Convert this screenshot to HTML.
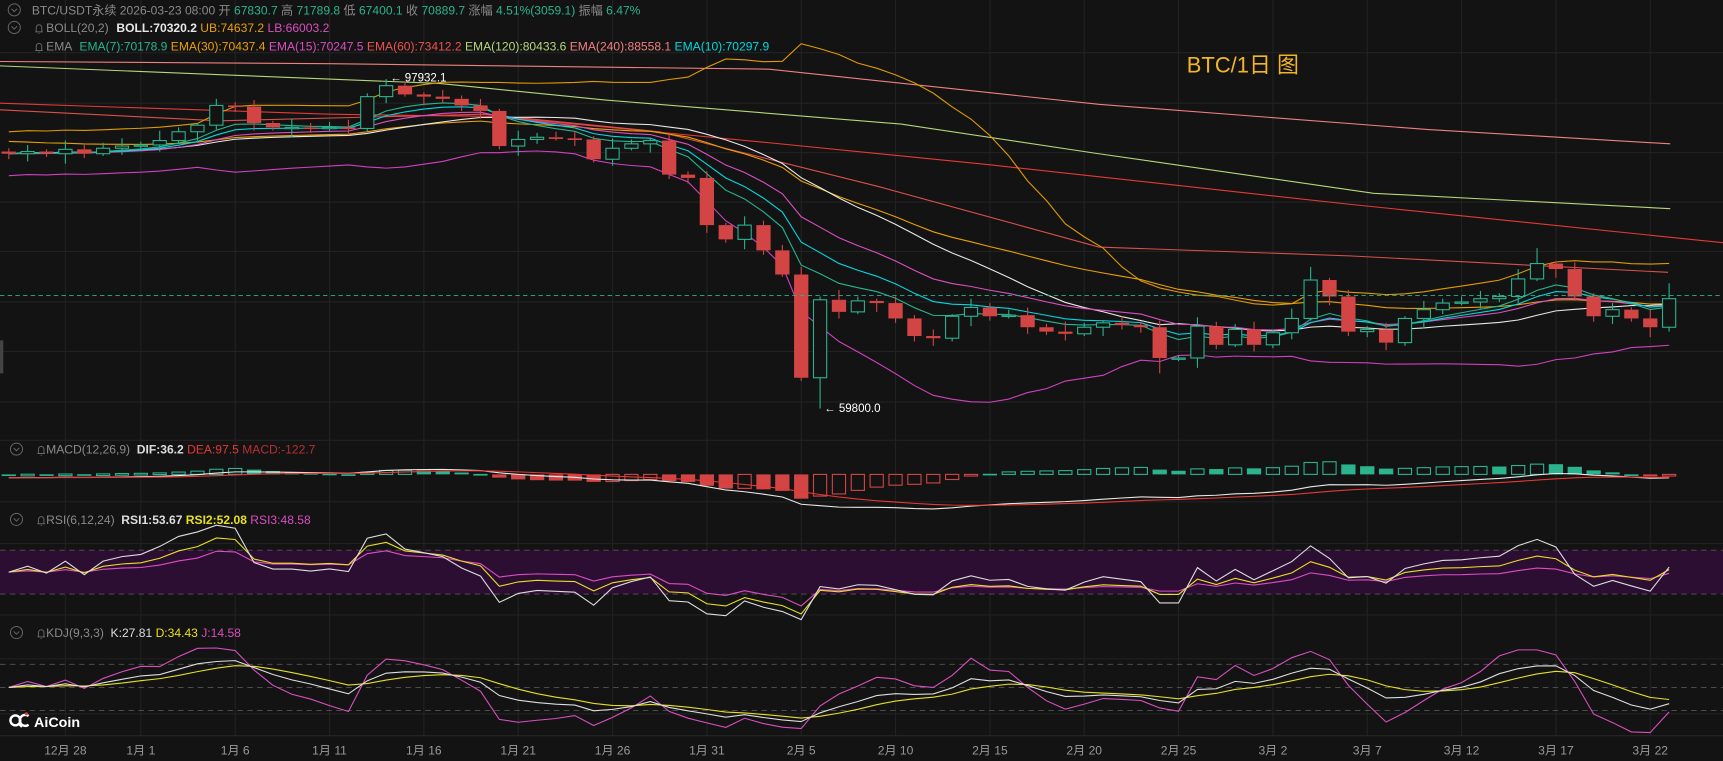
<!DOCTYPE html>
<html><head><meta charset="utf-8"><style>
html,body{margin:0;padding:0;background:#131313;overflow:hidden}
svg{display:block}
text{font-family:"Liberation Sans","Noto Sans CJK SC",sans-serif}
</style></head><body>
<svg id="s" width="1723" height="761" viewBox="0 0 1568 693" preserveAspectRatio="none" xmlns="http://www.w3.org/2000/svg">
<rect width="1568" height="693" fill="#131313"/>
<g id="grid" stroke="#222" stroke-width="1"></g>
<rect x="0" y="501" width="1568" height="40" fill="#2c0e33"/>
<g stroke="#555" stroke-dasharray="5,4" stroke-width="0.8">
<line x1="0" y1="501" x2="1568" y2="501"/><line x1="0" y1="541" x2="1568" y2="541"/>
<line x1="0" y1="605" x2="1568" y2="605"/><line x1="0" y1="626" x2="1568" y2="626"/><line x1="0" y1="647" x2="1568" y2="647"/>
</g>
<line x1="0" y1="670" x2="1568" y2="670" stroke="#2a2a2a"/>
<g id="plot"></g>
<line x1="0" y1="269" x2="1568" y2="269" stroke="#2bb38e" stroke-dasharray="4,3" stroke-width="0.8"/>
<rect x="0" y="310" width="3" height="30" fill="#444"/>
<g font-size="11">
<g fill="none" stroke="#666" stroke-width="0.9">
<circle cx="13" cy="9" r="5.5"/><path d="M10.5 8 L13 10.5 L15.5 8"/>
<circle cx="13" cy="25" r="5.5"/><path d="M10.5 24 L13 26.5 L15.5 24"/>
<circle cx="15" cy="409" r="5.5"/><path d="M12.5 408 L15 410.5 L17.5 408"/>
<circle cx="15" cy="473" r="5.5"/><path d="M12.5 472 L15 474.5 L17.5 472"/>
<circle cx="15" cy="576" r="5.5"/><path d="M12.5 575 L15 577.5 L17.5 575"/>
<path d="M32 29 h7 M33 29 v-4 a2.5 2.5 0 0 1 5 0 v4 M35.5 30 v1"/>
<path d="M32 46 h7 M33 46 v-4 a2.5 2.5 0 0 1 5 0 v4 M35.5 47 v1"/>
<path d="M34 413 h7 M35 413 v-4 a2.5 2.5 0 0 1 5 0 v4 M37.5 414 v1"/>
<path d="M34 477 h7 M35 477 v-4 a2.5 2.5 0 0 1 5 0 v4 M37.5 478 v1"/>
<path d="M34 580 h7 M35 580 v-4 a2.5 2.5 0 0 1 5 0 v4 M37.5 581 v1"/>
</g>
<text x="29" y="13" fill="#8a8a8a">BTC/USDT永续 2026-03-23 08:00 开 <tspan fill="#2bb38e">67830.7</tspan> 高 <tspan fill="#2bb38e">71789.8</tspan> 低 <tspan fill="#2bb38e">67400.1</tspan> 收 <tspan fill="#2bb38e">70889.7</tspan> 涨幅 <tspan fill="#2bb38e">4.51%(3059.1)</tspan> 振幅 <tspan fill="#2bb38e">6.47%</tspan></text>
<text x="42" y="29" fill="#8a8a8a">BOLL(20,2) <tspan fill="#e8e8e8" font-weight="bold" dx="4">BOLL:70320.2</tspan> <tspan fill="#eaa000">UB:74637.2</tspan> <tspan fill="#d94fc0">LB:66003.2</tspan></text>
<text x="42" y="46" fill="#8a8a8a">EMA <tspan fill="#26b58f" dx="4">EMA(7):70178.9</tspan> <tspan fill="#eaa000">EMA(30):70437.4</tspan> <tspan fill="#d94fc0">EMA(15):70247.5</tspan> <tspan fill="#ef5350">EMA(60):73412.2</tspan> <tspan fill="#b5d67a">EMA(120):80433.6</tspan> <tspan fill="#f08080">EMA(240):88558.1</tspan> <tspan fill="#00d8e0">EMA(10):70297.9</tspan></text>
<text x="42" y="413" fill="#8a8a8a">MACD(12,26,9) <tspan fill="#ddd" font-weight="bold" dx="3">DIF:36.2</tspan> <tspan fill="#e53935">DEA:97.5</tspan> <tspan fill="#b83030">MACD:-122.7</tspan></text>
<text x="42" y="477" fill="#8a8a8a">RSI(6,12,24) <tspan fill="#ddd" font-weight="bold" dx="3">RSI1:53.67</tspan> <tspan fill="#e6e020" font-weight="bold">RSI2:52.08</tspan> <tspan fill="#d94fc0">RSI3:48.58</tspan></text>
<text x="42" y="580" fill="#8a8a8a">KDJ(9,3,3) <tspan fill="#ddd" dx="3">K:27.81</tspan> <tspan fill="#e6e020">D:34.43</tspan> <tspan fill="#d94fc0">J:14.58</tspan></text>
</g>
<text x="1080" y="66" font-size="20" fill="#f2b52a">BTC/1日 图</text>
<text x="355" y="74" font-size="10.5" fill="#fff">← 97932.1</text>
<text x="750" y="375" font-size="10.5" fill="#fff">← 59800.0</text>
<g fill="none" stroke="#fff" stroke-width="2.2"><circle cx="14" cy="656" r="4.5"/><path d="M17 659 l3 3"/><path d="M26 652 a5 5 0 1 0 0 8"/></g>
<circle cx="24" cy="650" r="1.4" fill="#e53935"/>
<text x="31" y="662" font-size="13" font-weight="bold" fill="#fff">AiCoin</text>
<g id="xl" font-size="11" fill="#999" text-anchor="middle"></g>
</svg>
<script>
var C=[140,138,140,136,140,135,133,132,128,120,114,96,97,112,116,116,117,116,117,88,78,86,88,90,96,101,133,127,125,126,127,145,135,131,128,159,162,205,218,205,228,250,344,273,284,274,276,290,306,308,288,280,288,287,298,302,304,298,294,296,298,326,326,297,314,300,314,303,290,255,270,302,300,312,290,282,276,275,272,270,254,240,245,270,288,282,290,298,272];
var N=C.length,X=function(i){return 8+i*17.17};
var O=[],H=[],L=[],W=[3,6,2,8,4,5,7,3,9,4,2,6];
for(var i=0;i<N;i++){O[i]=i?C[i-1]:138;var t=Math.min(O[i],C[i]),b=Math.max(O[i],C[i]);H[i]=t-W[i%12];L[i]=b+W[(i+5)%12];}
H[20]=72;L[43]=372;H[81]=226;L[42]=347;H[69]=243;L[61]=340;H[88]=258;
var ns="http://www.w3.org/2000/svg",P=document.getElementById('plot'),G=document.getElementById('grid');
function el(n,a,p){var e=document.createElementNS(ns,n);for(var k in a)e.setAttribute(k,a[k]);(p||P).appendChild(e);return e}
function pl(arr,col,w){var d='';for(var i=0;i<arr.length;i++){d+=(d?'L':'M')+X(i).toFixed(1)+' '+arr[i].toFixed(1)}el('path',{d:d,fill:'none',stroke:col,'stroke-width':w||1})}
var labs=['12月 28','1月 1','1月 6','1月 11','1月 16','1月 21','1月 26','1月 31','2月 5','2月 10','2月 15','2月 20','2月 25','3月 2','3月 7','3月 12','3月 17','3月 22'];
var xl=document.getElementById('xl');
for(var k=0;k<labs.length;k++){var idx=k==0?3:7+5*(k-1);var xi=X(idx);el('line',{x1:xi,y1:0,x2:xi,y2:670},G);var tx=el('text',{x:xi,y:687},xl);tx.textContent=labs[k];}
[48,94,139,184,229,275,320,366,401,457,495,560,600,650].forEach(function(y){el('line',{x1:0,y1:y,x2:1568,y2:y},G)});
function lp(pts,col){el('path',{d:'M'+pts.join('L'),fill:'none',stroke:col,'stroke-width':1})}
lp(['0 56','300 58','700 63','1000 95','1300 118','1520 131'],'#f08080');
lp(['0 60','200 68','400 76','550 91','820 113','1000 140','1250 176','1520 190'],'#b5d67a');
lp(['0 94','300 104','450 106','700 130','900 150','1228 186','1568 221'],'#e53935');
lp(['0 100','200 110','440 104','600 120','800 170','1000 225','1228 233','1518 248'],'#d9504a');
function ema(a,n,s){var r=[],k=2/(n+1),v=s==null?a[0]:s;for(var i=0;i<a.length;i++){v=i==0&&s==null?a[0]:v+k*(a[i]-v);r.push(v)}return r}
var e7=ema(C,7),e10=ema(C,10),e15=ema(C,15),e30=ema(C,30,128);
var bm=[],bu=[],bl=[];
for(var i=0;i<N;i++){var s=Math.max(0,i-19),sum=0,c=0;for(var j=s;j<=i;j++){sum+=C[j];c++}var m=sum/c,v=0;for(j=s;j<=i;j++)v+=(C[j]-m)*(C[j]-m);var sd=Math.sqrt(v/c);if(i<19){sd=Math.max(sd,10);}bm.push(m);bu.push(m-2*sd);bl.push(m+2*sd)}
pl(bu,'#e09a00');pl(bl,'#d040c0');pl(e30,'#eaa000');pl(bm,'#e8e8e8');pl(e15,'#d94fc0');pl(e10,'#00d8e0');pl(e7,'#26b58f');
for(i=0;i<N;i++){var x=X(i),up=C[i]<=O[i],col=up?'#2bb38e':'#d34545',t=Math.min(O[i],C[i]),b=Math.max(O[i],C[i]);
el('line',{x1:x,y1:H[i],x2:x,y2:t,stroke:col});el('line',{x1:x,y1:b,x2:x,y2:L[i],stroke:col});
if(up)el('rect',{x:x-6,y:t,width:12,height:Math.max(b-t,1.2),fill:'#131313',stroke:col,'stroke-width':1});
else el('rect',{x:x-6.5,y:t,width:13,height:Math.max(b-t,1.5),fill:col});}
var p=C.map(function(y){return -y}),a12=ema(p,12),a26=ema(p,26),dif=[],dea,hist=[];
for(i=0;i<N;i++)dif.push(a12[i]-a26[i]);dea=ema(dif,9);
for(i=0;i<N;i++){var h=2*(dif[i]-dea[i]);hist.push(h);var y0=432,y1=432-h*0.6,c2=h>=0?'#2bb38e':'#d34545',inc=i&&Math.abs(h)>Math.abs(hist[i-1]);
var tt=Math.min(y0,y1),hh=Math.max(Math.abs(y1-y0),1.5);
if((h>=0&&inc)||(h<0&&!inc))el('rect',{x:X(i)-6,y:tt,width:12,height:hh,fill:'none',stroke:c2});else el('rect',{x:X(i)-6.5,y:tt,width:13,height:hh,fill:c2});}
pl(dif.map(function(d){return 435-d*0.62}),'#e8e8e8');pl(dea.map(function(d){return 435-d*0.62}),'#e53935');
function rsi(n){var r=[],ag=0,al=0;for(var i=0;i<N;i++){var d=i?p[i]-p[i-1]:0;var g=d>0?d:0,l=d<0?-d:0;if(i==0){ag=2;al=2}ag=(ag*(n-1)+g)/n;al=(al*(n-1)+l)/n;r.push(al==0?100:100-100/(1+ag/al))}return r}
function ry(v){return 521-(v-50)}
pl(rsi(24).map(ry),'#d94fc0');pl(rsi(12).map(ry),'#e6e020');pl(rsi(6).map(ry),'#ddd');
var K=[],D=[],J=[],kk=50,dd=50;
for(i=0;i<N;i++){var lo=-1e9,hi=1e9;for(j=Math.max(0,i-8);j<=i;j++){lo=Math.max(lo,L[j]);hi=Math.min(hi,H[j])}var rsv=lo==hi?50:(lo-C[i])/(lo-hi)*100;kk=2/3*kk+rsv/3;dd=2/3*dd+kk/3;K.push(kk);D.push(dd);J.push(3*kk-2*dd)}
function ky(v){return 626-(v-50)*0.7}
pl(J.map(ky),'#d94fc0');pl(D.map(ky),'#e6e020');pl(K.map(ky),'#ddd');
</script>
</body></html>
